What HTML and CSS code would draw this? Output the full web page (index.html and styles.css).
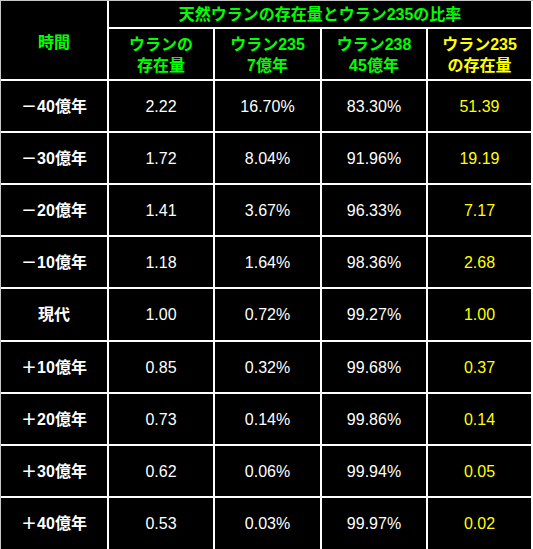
FILE: index.html
```html
<!DOCTYPE html>
<html lang="ja">
<head>
<meta charset="utf-8">
<title>天然ウランの存在量とウラン235の比率</title>
<link rel="stylesheet" href="styles.css">
</head>
<body>
<div class="table">
  <div class="cell head time">時間</div>
  <div class="cell head title">天然ウランの存在量とウラン235の比率</div>
  <div class="cell head sub">ウランの<br>存在量</div>
  <div class="cell head sub">ウラン235<br>7億年</div>
  <div class="cell head sub">ウラン238<br>45億年</div>
  <div class="cell head sub yellow">ウラン235<br>の存在量</div>

  <div class="cell label">－40億年</div><div class="cell">2.22</div><div class="cell">16.70%</div><div class="cell">83.30%</div><div class="cell yellow">51.39</div>
  <div class="cell label">－30億年</div><div class="cell">1.72</div><div class="cell">8.04%</div><div class="cell">91.96%</div><div class="cell yellow">19.19</div>
  <div class="cell label">－20億年</div><div class="cell">1.41</div><div class="cell">3.67%</div><div class="cell">96.33%</div><div class="cell yellow">7.17</div>
  <div class="cell label">－10億年</div><div class="cell">1.18</div><div class="cell">1.64%</div><div class="cell">98.36%</div><div class="cell yellow">2.68</div>
  <div class="cell label">現代</div><div class="cell">1.00</div><div class="cell">0.72%</div><div class="cell">99.27%</div><div class="cell yellow">1.00</div>
  <div class="cell label">＋10億年</div><div class="cell">0.85</div><div class="cell">0.32%</div><div class="cell">99.68%</div><div class="cell yellow">0.37</div>
  <div class="cell label">＋20億年</div><div class="cell">0.73</div><div class="cell">0.14%</div><div class="cell">99.86%</div><div class="cell yellow">0.14</div>
  <div class="cell label">＋30億年</div><div class="cell">0.62</div><div class="cell">0.06%</div><div class="cell">99.94%</div><div class="cell yellow">0.05</div>
  <div class="cell label">＋40億年</div><div class="cell">0.53</div><div class="cell">0.03%</div><div class="cell">99.97%</div><div class="cell yellow">0.02</div>
</div>
</body>
</html>
```

FILE: styles.css
```css
html, body {
  margin: 0;
  padding: 0;
  background: #ffffff;
}

.table {
  display: grid;
  grid-template-columns: 106px 104px 105px 104px 103px;
  grid-template-rows: 26px 50px 50px 50px 50px 50px 51px 50px 50px 50px 51px;
  gap: 2px;
  background: #ffffff;
  border-top: 1px solid #c8c8c8;
  border-left: 1px solid #c8c8c8;
  padding-right: 2px;
  width: 530px;
  font-family: "Liberation Sans", "Noto Sans CJK JP", sans-serif;
  font-size: 16px;
  color: #ffffff;
}

.cell {
  background: #000000;
  display: flex;
  align-items: center;
  justify-content: center;
  text-align: center;
  line-height: 21px;
}

.head {
  color: #00ff00;
  font-weight: bold;
}

.time {
  grid-row: 1 / span 2;
  padding-top: 4px;
}

.title {
  grid-column: 2 / span 4;
}

.sub {
  padding-top: 2px;
}

.label {
  font-weight: bold;
}

.yellow {
  color: #ffff00;
}
```
